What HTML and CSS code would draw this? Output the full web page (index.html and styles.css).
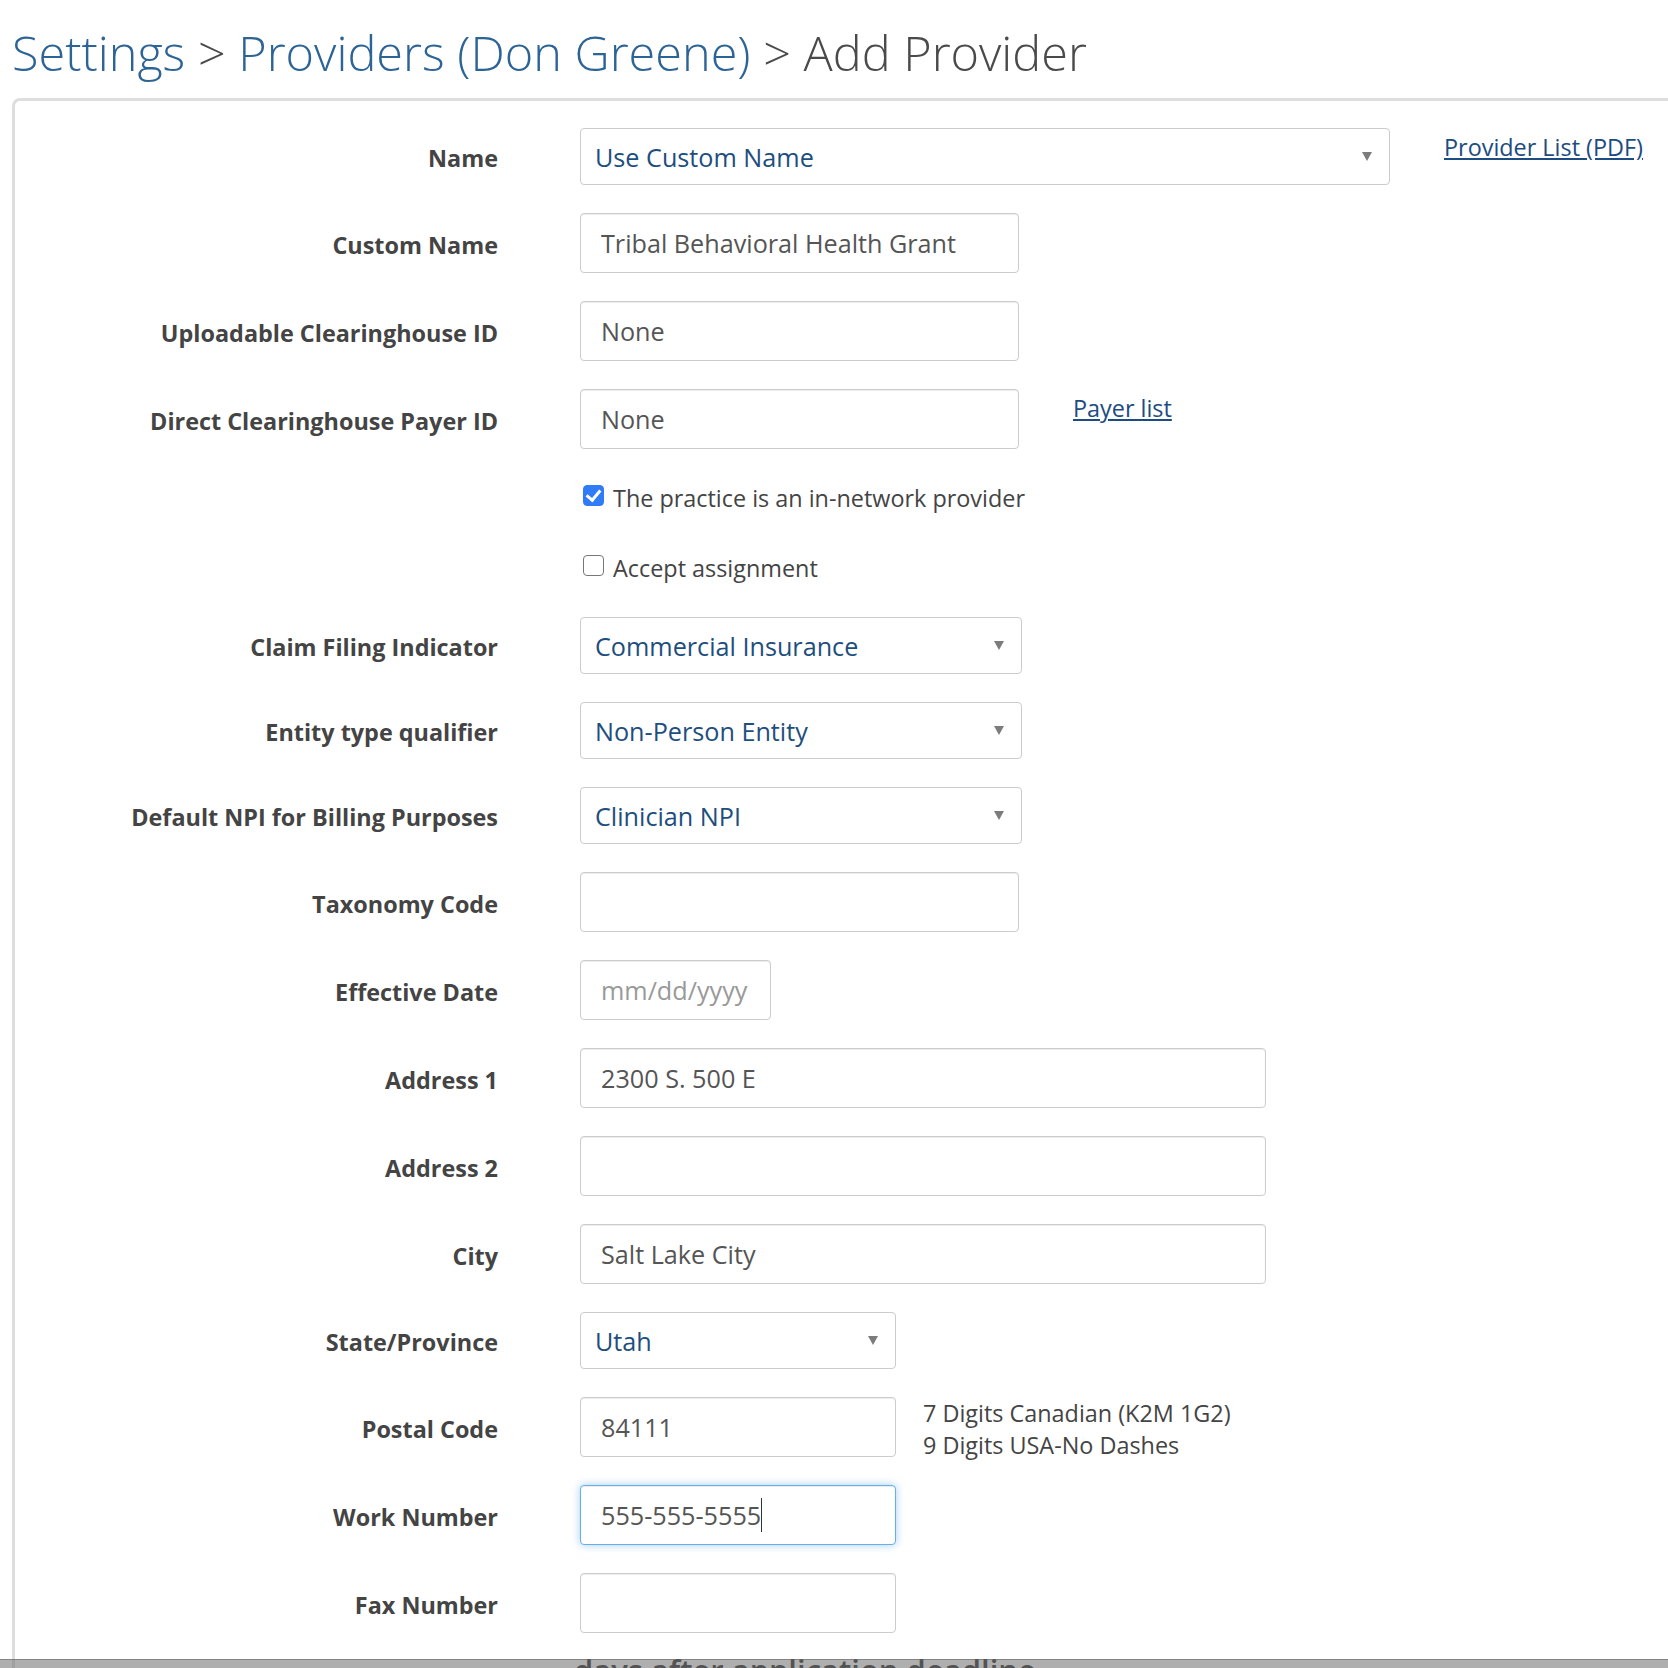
FILE: index.html
```html
<!DOCTYPE html>
<html lang="en">
<head>
    <meta charset="UTF-8">
    <title>Add Provider</title>
    <link rel="stylesheet" href="styles.css">
</head>
<body>
<div class="page">
    <h1 class="crumbs">
        <a href="#">Settings</a> &gt; <a href="#">Providers (Don Greene)</a> &gt; <span>Add Provider</span>
    </h1>

    <form class="panel">
        <div class="row">
            <label class="field-label">Name</label>
            <div class="select-wrap w-name">
                <select><option>Use Custom Name</option></select>
            </div>
            <a class="side-link" href="#">Provider List (PDF)</a>
        </div>

        <div class="row">
            <label class="field-label">Custom Name</label>
            <input class="text w-mid" type="text" value="Tribal Behavioral Health Grant">
        </div>

        <div class="row">
            <label class="field-label">Uploadable Clearinghouse ID</label>
            <input class="text w-mid" type="text" value="None">
        </div>

        <div class="row">
            <label class="field-label">Direct Clearinghouse Payer ID</label>
            <input class="text w-mid" type="text" value="None">
            <a class="side-link" href="#">Payer list</a>
        </div>

        <div class="row check-row">
            <span class="field-label"></span>
            <label class="check"><input type="checkbox" checked> The practice is an in-network provider</label>
        </div>

        <div class="row check-row">
            <span class="field-label"></span>
            <label class="check"><input type="checkbox"> Accept assignment</label>
        </div>

        <div class="row">
            <label class="field-label">Claim Filing Indicator</label>
            <div class="select-wrap w-sel">
                <select><option>Commercial Insurance</option></select>
            </div>
        </div>

        <div class="row">
            <label class="field-label">Entity type qualifier</label>
            <div class="select-wrap w-sel">
                <select><option>Non-Person Entity</option></select>
            </div>
        </div>

        <div class="row">
            <label class="field-label">Default NPI for Billing Purposes</label>
            <div class="select-wrap w-sel">
                <select><option>Clinician NPI</option></select>
            </div>
        </div>

        <div class="row">
            <label class="field-label">Taxonomy Code</label>
            <input class="text w-mid" type="text">
        </div>

        <div class="row">
            <label class="field-label">Effective Date</label>
            <input class="text w-date" type="text" placeholder="mm/dd/yyyy">
        </div>

        <div class="row">
            <label class="field-label">Address 1</label>
            <input class="text w-long" type="text" value="2300 S. 500 E">
        </div>

        <div class="row">
            <label class="field-label">Address 2</label>
            <input class="text w-long" type="text">
        </div>

        <div class="row">
            <label class="field-label">City</label>
            <input class="text w-long" type="text" value="Salt Lake City">
        </div>

        <div class="row">
            <label class="field-label">State/Province</label>
            <div class="select-wrap w-short">
                <select><option>Utah</option></select>
            </div>
        </div>

        <div class="row">
            <label class="field-label">Postal Code</label>
            <input class="text w-short" type="text" value="84111">
            <div class="hint">7 Digits Canadian (K2M 1G2)<br>9 Digits USA-No Dashes</div>
        </div>

        <div class="row">
            <label class="field-label">Work Number</label>
            <div class="focus-wrap">
                <input class="text w-short focused" type="text" value="555-555-5555">
                <span class="caret" aria-hidden="true">555-555-5555</span>
            </div>
        </div>

        <div class="row">
            <label class="field-label">Fax Number</label>
            <input class="text w-short" type="text">
        </div>

        <p class="note">days after application deadline.</p>
    </form>
</div>
<div class="dock"></div>
</body>
</html>
```

FILE: styles.css
```css
body {
    margin: 0;
    font-family: "Open Sans", "Liberation Sans", sans-serif;
    color: #444;
    background: #fff;
    overflow: hidden;
}

.page {
    padding: 18px 0 0 12px;
}

.crumbs {
    margin: 0 0 12px;
    font-size: 48.6px;
    font-weight: 300;
    line-height: 68px;
    color: #4a4a4a;
}

.crumbs a {
    color: #2d6496;
    text-decoration: none;
}

.panel {
    display: flex;
    flex-direction: column;
    gap: 28px;
    padding: 27px 0 40px;
    border-top: 3px solid #dedede;
    border-left: 3px solid #dedede;
    border-top-left-radius: 8px;
}

.row {
    display: flex;
    align-items: center;
}

.field-label {
    flex: none;
    width: 483px;
    margin-right: 82px;
    padding-top: 3px;
    text-align: right;
    font-size: 23.4px;
    font-weight: 700;
    color: #444;
}

/* text fields */
.text {
    box-sizing: border-box;
    height: 60px;
    padding: 0 20px;
    border: 1px solid #ccc;
    border-radius: 4px;
    box-shadow: inset 0 1px 1px rgba(0, 0, 0, 0.075);
    font-family: inherit;
    font-size: 25.2px;
    color: #555;
    background: #fff;
    outline: none;
}

.text::placeholder {
    color: #999;
}

.text.focused {
    border-color: #66afe9;
    box-shadow: inset 0 1px 1px rgba(0, 0, 0, 0.075), 0 0 8px rgba(102, 175, 233, 0.6);
}

.w-mid { width: 439px; }
.w-date { width: 191px; }
.w-long { width: 686px; }
.w-short { width: 316px; }
.w-name { width: 810px; }
.w-sel { width: 442px; }

/* selects */
.select-wrap {
    position: relative;
    flex: none;
}

.select-wrap select {
    box-sizing: border-box;
    width: 100%;
    height: 57px;
    padding: 0 40px 0 14px;
    border: 1px solid #ccc;
    border-radius: 4px;
    background: #fff;
    font-family: inherit;
    font-size: 25.2px;
    color: #1d4e7e;
    appearance: none;
    -webkit-appearance: none;
    outline: none;
}

.select-wrap::after {
    content: "";
    position: absolute;
    right: 18px;
    top: 24px;
    border-left: 5px solid transparent;
    border-right: 5px solid transparent;
    border-top: 9px solid #7c7c7c;
    pointer-events: none;
}

/* the blinking cursor in the focused field */
.focus-wrap {
    position: relative;
}

.caret {
    position: absolute;
    left: 21px;
    top: 13px;
    height: 34px;
    font-size: 25.2px;
    line-height: 34px;
    color: transparent;
    border-right: 1.5px solid #333;
    pointer-events: none;
}

.side-link {
    align-self: flex-start;
    margin-left: 54px;
    margin-top: 0;
    font-size: 23.4px;
    line-height: 38px;
    color: #1c4c80;
    text-decoration: underline;
}

.hint {
    align-self: flex-start;
    margin: 0 0 -4px 27px;
    font-size: 23.4px;
    line-height: 32px;
    color: #444;
}

/* checkboxes */
.check-row {
    height: 42px;
}

.check {
    display: flex;
    align-items: center;
    gap: 9px;
    font-size: 23.4px;
    color: #444;
}

.check input {
    appearance: none;
    -webkit-appearance: none;
    position: relative;
    top: -3px;
    box-sizing: border-box;
    width: 21px;
    height: 21px;
    margin: 0 0 0 3px;
    border: 1.5px solid #777;
    border-radius: 4px;
    background: #fff;
}

.check input:checked {
    border-color: #2f7cf6;
    background: #2f7cf6;
}

.check input:checked::after {
    content: "";
    position: absolute;
    left: 5px;
    top: 1px;
    width: 6px;
    height: 11px;
    border-right: 3px solid #fff;
    border-bottom: 3px solid #fff;
    transform: rotate(40deg);
}

.note {
    margin: -12px 0 0 559px;
    font-size: 31px;
    font-weight: 600;
    color: #333;
}

.dock {
    position: fixed;
    left: 0;
    right: 0;
    bottom: 0;
    height: 8px;
    background: rgba(110, 110, 110, 0.55);
    border-top: 1px solid rgba(90, 90, 90, 0.5);
}
```
